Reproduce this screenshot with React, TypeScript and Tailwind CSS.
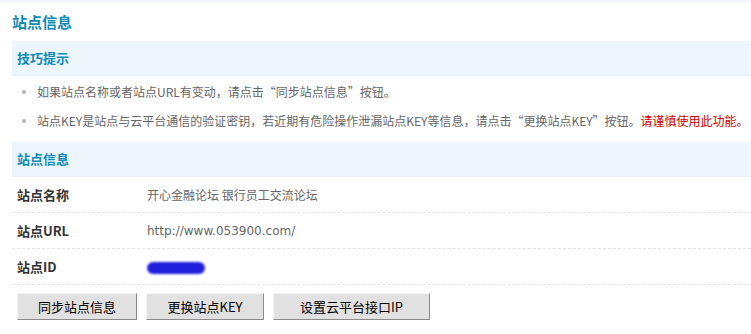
import React from "react";

const font = { fontFamily: '"Noto Sans CJK SC", "Liberation Sans", sans-serif' };

function Row({ label, children }: { label: string; children: React.ReactNode }) {
  return (
    <div className="flex h-[36px] items-center border-b border-dashed border-[#e4e4e4] pl-[5px]">
      <div className="w-[130px] text-[13px] font-bold text-[#333]">{label}</div>
      <div className="text-[12px] text-[#666]">{children}</div>
    </div>
  );
}

function Btn({ w, children }: { w: string; children: React.ReactNode }) {
  return (
    <button
      className={`${w} h-[27px] border border-t-[#f4f4f4] border-l-[#f4f4f4] border-r-[#8a8a8a] border-b-[#8a8a8a] bg-[#e1e1e1] text-[13px] text-black`}
    >
      {children}
    </button>
  );
}

export default function App() {
  return (
    <div className="w-[751px] h-[334px] bg-white overflow-hidden" style={font}>
      <div className="h-[3px] bg-[#f1f7fc]" />
      <div className="pl-[12px]">
        <div className="h-[38px] flex items-center text-[15px] font-bold text-[#0d8ab5]">站点信息</div>
        <div className="h-[35px] flex items-center bg-[#eef6fd] border-b border-dotted border-[#dfeaf2] pl-[5px] text-[13px] font-bold text-[#0d8ab5]">
          技巧提示
        </div>
        <ul className="pt-[1px] text-[12px] text-[#666]">
          <li className="h-[29px] flex items-center pl-[10px]">
            <span className="mr-[11px] inline-block h-[4px] w-[4px] rounded-full bg-[#b5b5b5]" />
            如果站点名称或者站点URL有变动，请点击“同步站点信息”按钮。
          </li>
          <li className="h-[29px] flex items-center pl-[10px] whitespace-nowrap">
            <span className="mr-[11px] inline-block h-[4px] w-[4px] rounded-full bg-[#b5b5b5]" />
            站点KEY是站点与云平台通信的验证密钥，若近期有危险操作泄漏站点KEY等信息，请点击“更换站点KEY”按钮。
            <span className="text-[#d00000]">请谨慎使用此功能。</span>
          </li>
        </ul>
        <div className="mt-[7px] h-[35px] flex items-center bg-[#eef6fd] border-b border-dotted border-[#dfeaf2] pl-[5px] text-[13px] font-bold text-[#0d8ab5]">
          站点信息
        </div>
        <Row label="站点名称">开心金融论坛 银行员工交流论坛</Row>
        <Row label="站点URL">
          <span style={{ fontFamily: '"DejaVu Sans", sans-serif' }}>http://www.053900.com/</span>
        </Row>
        <Row label="站点ID">
          <span className="inline-block h-[12px] w-[58px] rounded-full bg-[#2020dc] blur-[1px] align-middle" />
        </Row>
        <div className="flex gap-[9px] pl-[5px] pt-[8px]">
          <Btn w="w-[120px]">同步站点信息</Btn>
          <Btn w="w-[118px]">更换站点KEY</Btn>
          <Btn w="w-[157px]">设置云平台接口IP</Btn>
        </div>
      </div>
    </div>
  );
}
